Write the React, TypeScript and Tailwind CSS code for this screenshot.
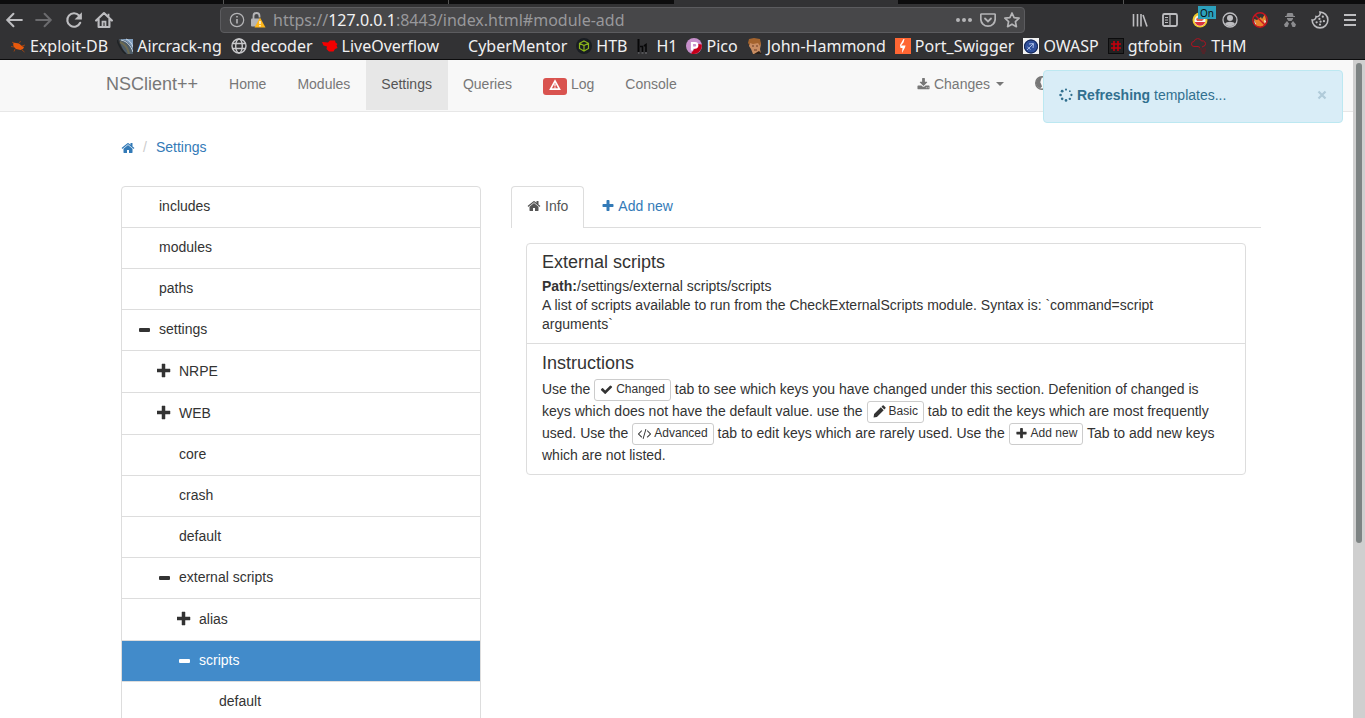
import type { ReactNode } from 'react';

const PATHS = {
  home: 'M1472 992v480q0 26-19 45t-45 19h-384v-384h-256v384h-384q-26 0-45-19t-19-45v-480q0-1 .5-3t.5-3l575-474 575 474q1 2 1 6zm223-69l-62 74q-8 9-21 11h-3q-13 0-21-7l-692-577-692 577q-12 8-24 7-13-2-21-11l-62-74q-8-10-7-23.5t11-21.5l719-599q32-26 76-26t76 26l244 204v-195q0-14 9-23t23-9h192q14 0 23 9t9 23v408l219 182q10 8 11 21.5t-7 23.5z',
  plus: 'M1600 736v192q0 40-28 68t-68 28h-416v416q0 40-28 68t-68 28h-192q-40 0-68-28t-28-68v-416h-416q-40 0-68-28t-28-68v-192q0-40 28-68t68-28h416v-416q0-40 28-68t68-28h192q40 0 68 28t28 68v416h416q40 0 68 28t28 68z',
  download:
    'M1344 1344q0-26-19-45t-45-19-45 19-19 45 19 45 45 19 45-19 19-45zm256 0q0-26-19-45t-45-19-45 19-19 45 19 45 45 19 45-19 19-45zm128-224v320q0 40-28 68t-68 28h-1472q-40 0-68-28t-28-68v-320q0-40 28-68t68-28h465l135 136q58 56 136 56t136-56l136-136h464q40 0 68 28t28 68zm-325-569q17 41-14 70l-448 448q-18 19-45 19t-45-19l-448-448q-31-29-14-70 17-39 59-39h256v-448q0-26 19-45t45-19h256q26 0 45 19t19 45v448h256q42 0 59 39z',
  code: 'M553 1399l-50 50q-10 10-23 10t-23-10l-466-466q-10-10-10-23t10-23l466-466q10-10 23-10t23 10l50 50q10 10 10 23t-10 23l-393 393 393 393q10 10 10 23t-10 23zm591-1067l-373 1291q-4 13-15.5 19.5t-23.5 2.5l-62-17q-13-4-19.5-15.5t-2.5-24.5l373-1291q4-13 15.5-19.5t23.5-2.5l62 17q13 4 19.5 15.5t2.5 24.5zm657 651l-466 466q-10 10-23 10t-23-10l-50-50q-10-10-10-23t10-23l393-393-393-393q-10-10-10-23t10-23l50-50q10-10 23-10t23 10l466 466q10 10 10 23t-10 23z',
  check:
    'M1671 566q0 40-28 68l-724 724-136 136q-28 28-68 28t-68-28l-136-136-362-362q-28-28-28-68t28-68l136-136q28-28 68-28t68 28l294 295 656-657q28-28 68-28t68 28l136 136q28 28 28 68z',
  pencil: 'M150 1250L1080 320L1470 710L540 1640L80 1710ZM1170 230L1330 70Q1400 10 1470 70L1720 320Q1780 390 1720 460L1560 620Z',
};

function Glyph({ name, className = 'size-[14px]' }: { name: keyof typeof PATHS; className?: string }) {
  return (
    <svg viewBox="0 0 1792 1792" fill="currentColor" aria-hidden="true" className={`inline-block shrink-0 ${className}`}>
      <path d={PATHS[name]} />
    </svg>
  );
}

function Svg({ children, box = 16, className = 'size-4' }: { children: ReactNode; box?: number; className?: string }) {
  return (
    <svg viewBox={`0 0 ${box} ${box}`} fill="none" aria-hidden="true" className={`block shrink-0 ${className}`}>
      {children}
    </svg>
  );
}

function ToolButton({ label, children }: { label: string; children: ReactNode }) {
  return (
    <button type="button" aria-label={label} className="flex size-[18px] items-center justify-center text-[#bdbdc0]">
      {children}
    </button>
  );
}

const BOOKMARKS: { label: string; icon: ReactNode }[] = [
  {
    label: 'Exploit-DB',
    icon: (
      <Svg>
        <path d="M3 4.500l3 .5 3 .5 3 2.500 2 1-1 2-2.500 1L6 11 3.500 8.500z" fill="#e8590c" />
        <path d="M1 8.500l3 .5M5 11l-1 2.500M9 4.500l2-1M12 8l3-1M12 12l2.500 2M2 4l2 1.500" stroke="#9a4313" />
      </Svg>
    ),
  },
  {
    label: 'Aircrack-ng',
    icon: (
      <Svg>
        <path d="M2 1h14v15H10C6 13 4 8 2 1z" fill="#4d5c68" />
        <path d="M3 1c7 1 11 5 13 11V1z" fill="#7f9dbd" />
        <path d="M4 2c6 1 10 6 12 12M9 1c3 1 6 4 7 8" stroke="#c9d7e6" />
        <path d="M3 4c5 2 8 6 9 12" stroke="#6d6a50" strokeWidth="2" />
        <path d="M0 2c2 6 5 11 9 14" stroke="#1f2326" strokeWidth="1.500" />
      </Svg>
    ),
  },
  {
    label: 'decoder',
    icon: (
      <Svg>
        <g stroke="#c9c9cb" strokeWidth="1.400">
          <circle cx="8" cy="8" r="7" />
          <ellipse cx="8" cy="8" rx="3.300" ry="7" />
          <path d="M1.500 5.500h13M1.500 10.500h13" />
        </g>
      </Svg>
    ),
  },
  {
    label: 'LiveOverflow',
    icon: (
      <Svg>
        <path d="M0 4l6 .5L8 2.500h5l.5 2 2 1.500-1 1.500 1 2.500-2.500 1-1.500 2.500H7L4.500 11 5 8.500 1.500 7.500z" fill="#f40000" />
      </Svg>
    ),
  },
  { label: 'CyberMentor', icon: <Svg>{null}</Svg> },
  {
    label: 'HTB',
    icon: (
      <Svg>
        <circle cx="8" cy="8" r="8" fill="#191d22" />
        <path d="M8 3l4.500 2.300v5.200L8 13l-4.500-2.500V5.300zM3.500 5.300L8 7.600l4.500-2.300M8 7.600V13" stroke="#8bb51b" strokeWidth="1.200" />
      </Svg>
    ),
  },
  {
    label: 'H1',
    icon: (
      <Svg>
        <path d="M2.500 1v13" stroke="#070708" strokeWidth="2" />
        <path d="M4 8.500h2.500V14M8 8l2-1.500V14" stroke="#070708" strokeWidth="1.600" />
        <path d="M2 15h1.500M5.500 15h2M9 15h2" stroke="#77777a" />
      </Svg>
    ),
  },
  {
    label: 'Pico',
    icon: (
      <Svg>
        <circle cx="8" cy="8" r="8" fill="#c78fcb" />
        <path d="M15.700 6.500A8 8 0 0 1 5 15.400L12 6z" fill="#c5001a" />
        <path d="M6 12.500V5h3a2.300 2.300 0 0 1 0 4.600H7" stroke="#fff" strokeWidth="2.200" />
      </Svg>
    ),
  },
  {
    label: 'John-Hammond',
    icon: (
      <Svg>
        <path d="M2 3l4-2 6 1 2 4-1 5 1 5H6L4 11 2 8z" fill="#c98d62" />
        <path d="M1 5l1-4 5-1 6 1 1 5-1 2-2-3-5 1-3-1v3z" fill="#a3632d" />
        <path d="M5 8h2M9 8h2M7 12h3" stroke="#6b3c26" />
        <path d="M7 16l5-3 3 3z" fill="#2c2018" />
      </Svg>
    ),
  },
  {
    label: 'Port_Swigger',
    icon: (
      <Svg>
        <rect width="16" height="16" fill="#ff6633" />
        <path d="M9.500 1L8.500 4.500 6 7.500h4.500L10 9.500 7 15l.5-5H5.500L5 7l3.500-6z" fill="#fff" />
      </Svg>
    ),
  },
  {
    label: 'OWASP',
    icon: (
      <Svg>
        <rect width="16" height="16" fill="#f2f2f2" />
        <circle cx="8" cy="8.500" r="7" fill="#2f4f9a" />
        <circle cx="8" cy="8.500" r="6.500" stroke="#12224d" />
        <path d="M4 12l6-6M6 6l4.500-.5L10 10M4.500 9l3 2.500" stroke="#a9bde6" />
      </Svg>
    ),
  },
  {
    label: 'gtfobin',
    icon: (
      <Svg>
        <rect width="16" height="16" fill="#0c0c0d" />
        <rect x="1" y="1" width="14" height="14" fill="#222" />
        <path d="M6 3v10M10 3v10M3 6h10M3 10h10" stroke="#c4000d" strokeWidth="1.600" />
      </Svg>
    ),
  },
  {
    label: 'THM',
    icon: (
      <Svg>
        <path d="M7 8.500H3a2.500 2.500 0 0 1 0-5A4 4 0 0 1 10.500 3a3 3 0 0 1 3.500 4.500L11 9M7 8.500l2 1" stroke="#b01220" />
        <path d="M8 11h3M12 11h3M10 13h5M11 15h3" stroke="#6e1820" />
      </Svg>
    ),
  },
];

type TreeNode = { label: string; depth: number; state?: 'open' | 'closed'; active?: boolean };

const TREE: TreeNode[] = [
  { label: 'includes', depth: 0 },
  { label: 'modules', depth: 0 },
  { label: 'paths', depth: 0 },
  { label: 'settings', depth: 0, state: 'open' },
  { label: 'NRPE', depth: 1, state: 'closed' },
  { label: 'WEB', depth: 1, state: 'closed' },
  { label: 'core', depth: 1 },
  { label: 'crash', depth: 1 },
  { label: 'default', depth: 1 },
  { label: 'external scripts', depth: 1, state: 'open' },
  { label: 'alias', depth: 2, state: 'closed' },
  { label: 'scripts', depth: 2, state: 'open', active: true },
  { label: 'default', depth: 3 },
];

const INDENT = ['pl-[15px]', 'pl-[35px]', 'pl-[55px]', 'pl-[75px]'];

function TreeRow({ node }: { node: TreeNode }) {
  const height = node.state === 'closed' ? 'h-[42px]' : 'h-[41px]';
  const colour = node.active ? 'bg-[#428bca] text-white' : 'text-[#333]';
  return (
    <li className={`border-b border-[#ddd] ${height}`}>
      <a href="#module-add" className={`flex h-full items-center pb-[2px] ${INDENT[node.depth]} ${colour}`}>
        <span className="flex w-[22px] items-center">
          {node.state === 'open' && (
            <Svg box={15} className="size-[15px]">
              <rect x="2" y="6" width="11" height="4" rx="1" fill="currentColor" />
            </Svg>
          )}
          {node.state === 'closed' && (
            <Svg box={15} className="size-[15px]">
              <path d="M5 1h3v5h5v3H8v5H5V9H0V6h5z" fill="currentColor" stroke="currentColor" strokeWidth=".5" strokeLinejoin="round" />
            </Svg>
          )}
        </span>
        {node.label}
      </a>
    </li>
  );
}

function BrowserBar() {
  return (
    <header className="shrink-0 border-b border-[#0c0c0d] bg-[#323234] font-['Noto_Sans',sans-serif] text-[#f0f0f1]">
      <div className="flex h-1 bg-[#0c0c0d]">
        <span className="w-[224px] border-r border-[#555]" />
        <span className="w-[225px] border-r border-[#555]" />
        <span className="w-[225px]" />
        <span className="w-[224px] bg-[#323234]" />
        <span className="w-[226px] border-r border-[#555]" />
      </div>
      <div className="flex h-8 items-center pr-[6px] pl-[5px]">
        <div className="flex w-[215px] items-center gap-3">
          <ToolButton label="Back">
            <Svg className="size-[18px]">
              <path d="M15 8H2M7.500 2.500L2 8l5.500 5.500" stroke="currentColor" strokeWidth="1.800" strokeLinecap="round" />
            </Svg>
          </ToolButton>
          <ToolButton label="Forward">
            <Svg className="size-[18px]">
              <path d="M1 8h13M8.500 2.500L14 8l-5.500 5.500" stroke="#6b6b6e" strokeWidth="1.800" strokeLinecap="round" />
            </Svg>
          </ToolButton>
          <ToolButton label="Reload">
            <Svg className="size-[18px]">
              <path d="M13.500 10.500A6 6 0 1 1 12.500 4" stroke="currentColor" strokeWidth="1.900" strokeLinecap="round" />
              <path d="M15 1v6.500H8.500z" fill="currentColor" />
            </Svg>
          </ToolButton>
          <ToolButton label="Home page">
            <Svg className="size-[18px]">
              <path d="M1 8.500L8 1.800l7 6.700M3.200 7.500v6.700h9.600V7.500" stroke="currentColor" strokeWidth="1.900" strokeLinejoin="round" strokeLinecap="round" />
              <path d="M6.700 14V9.500h2.600V14M12 2.500V5" stroke="currentColor" strokeWidth="1.600" />
            </Svg>
          </ToolButton>
        </div>
        <div className="flex h-[26px] min-w-0 flex-1 items-center rounded-sm border border-[#5c5c5f] bg-[#474749] pr-1 pl-2">
          <Svg className="size-4">
            <circle cx="8" cy="8" r="6.700" stroke="#b5b5b7" strokeWidth="1.200" />
            <path d="M8 7v4.500M8 4v1.600" stroke="#b5b5b7" strokeWidth="1.600" />
          </Svg>
          <Svg className="ml-[5px] size-4">
            <path d="M3.500 7V4a3 3 0 0 1 6 0v1.500" stroke="#b5b5b7" strokeWidth="1.800" />
            <rect x="1" y="6.500" width="9" height="8" rx="1" fill="#b5b5b7" />
            <path d="M10 5.500L15.500 15.500h-11z" fill="#ffb61a" />
            <path d="M10 9v3M10 13v1.400" stroke="#fff" strokeWidth="1.300" />
          </Svg>
          <a href="#module-add" className="ml-[7px] flex-1 text-[16px] leading-6 text-[#98989b]">
            https://<span className="text-[#f2f2f3]">127.0.0.1</span>:8443/index.html#module-add
          </a>
          <div className="flex items-center gap-2 text-[#b5b5b7]">
            <Svg>
              <path d="M2 8h.01M8 8h.01M14 8h.01" stroke="currentColor" strokeWidth="4" strokeLinecap="round" />
            </Svg>
            <Svg>
              <path d="M1.500 2h13a.8.8 0 0 1 .7.8V7a7 7 0 0 1-14.400 0V2.800a.8.8 0 0 1 .7-.8z" stroke="currentColor" strokeWidth="1.700" />
              <path d="M5 6.500l3 3 3-3" stroke="currentColor" strokeWidth="1.800" strokeLinecap="round" />
            </Svg>
            <Svg>
              <path d="M8 1l2.100 4.700 5 .5-3.700 3.500 1 5L8 12.200l-4.400 2.500 1-5L.9 6.200l5-.5z" stroke="currentColor" strokeWidth="1.700" strokeLinejoin="round" />
            </Svg>
          </div>
        </div>
        <div className="ml-[106px] flex items-center gap-3">
          <ToolButton label="Library">
            <Svg>
              <path d="M1.500 2v12.500M5.500 2v12.500M9 2v12.500M11 3l4 11.500" stroke="currentColor" strokeWidth="1.600" />
            </Svg>
          </ToolButton>
          <ToolButton label="Sidebars">
            <Svg>
              <rect x="1" y="2" width="14" height="12" rx="1.500" stroke="currentColor" strokeWidth="1.800" />
              <path d="M8 2v12M3 5.500h3M3 8h3M3 10.500h3" stroke="currentColor" strokeWidth="1.200" />
            </Svg>
          </ToolButton>
          <span className="relative">
            <ToolButton label="Proxy switcher">
              <Svg>
                <circle cx="8" cy="8" r="7.500" fill="#f0c92d" />
                <circle cx="8" cy="8.500" r="5.500" fill="#f4f4f4" />
                <path d="M2.800 10h10.400A5.500 5.500 0 0 1 2.800 10z" fill="#d9303e" />
                <path d="M4 7l4-3 4 3-2 2H5z" fill="#d8604c" />
              </Svg>
            </ToolButton>
            <span className="absolute -top-[5px] left-[7px] flex h-[13px] w-[18px] items-center justify-center bg-[#2ca1bd] text-[10px] leading-3 text-[#0c0c0d]">
              On
            </span>
          </span>
          <ToolButton label="Account">
            <Svg>
              <circle cx="8" cy="8" r="7" stroke="currentColor" strokeWidth="1.300" />
              <circle cx="8" cy="6" r="3" fill="currentColor" />
              <path d="M3 12c1-3 9-3 10 0-2.500 3-7.500 3-10 0z" fill="currentColor" />
            </Svg>
          </ToolButton>
          <ToolButton label="Proxy off">
            <Svg>
              <path d="M2 7l3 1 4-3 1 2 3-5 1 6-1 5-4 2-5-1z" fill="#e8842c" />
              <path d="M2 8l2 4-1 1zM12 8l2 1-1 3z" fill="#f3f3f3" />
              <circle cx="8" cy="8" r="7.200" stroke="#c81420" strokeWidth="1.400" />
              <path d="M3 3l10 10" stroke="#c81420" strokeWidth="1.400" />
            </Svg>
          </ToolButton>
          <ToolButton label="User agent">
            <Svg>
              <path d="M5 1.500l1-.5h4l1 .5.5 2.500h1.500v1h-10V4h1.500zM5 6h6v1L9.500 9h-3L5 7z" fill="#8c8c8f" />
              <path d="M5 9l2 2.500L5.500 15H3l-1-2.500zM11 9l-2 2.500 1.500 3.500H13l1-2.500z" fill="#8c8c8f" />
            </Svg>
          </ToolButton>
          <ToolButton label="Cookies">
            <Svg className="size-[18px]">
              <path d="M8 1A7 7 0 1 1 1 8a3 3 0 0 0 3.500-3A3 3 0 0 0 8 1z" stroke="currentColor" strokeWidth="1.400" />
              <path d="M10.500 5h.01M7.500 7h.01M11.500 9h.01M5 10h.01M8 12h.01M8.500 9.500h.01" stroke="currentColor" strokeWidth="2" strokeLinecap="round" />
            </Svg>
          </ToolButton>
          <ToolButton label="Menu">
            <Svg>
              <path d="M2 3h12M2 8h12M2 13h12" stroke="currentColor" strokeWidth="2" />
            </Svg>
          </ToolButton>
        </div>
      </div>
      <nav aria-label="Bookmarks" className="flex h-[23px] items-center gap-[9px] pb-[3px] pl-[10px] text-[16px] leading-5">
        {BOOKMARKS.map((b) => (
          <a key={b.label} href="#module-add" className="flex items-center gap-1 whitespace-nowrap">
            {b.icon}
            {b.label}
          </a>
        ))}
      </nav>
    </header>
  );
}

function NavLink({ children, active }: { children: ReactNode; active?: boolean }) {
  return (
    <a
      href="#module-add"
      className={`flex h-[50px] items-center gap-1 pr-4 pb-[2px] pl-[15px] ${active ? 'bg-[#e7e7e7] text-[#555]' : 'text-[#777]'}`}
    >
      {children}
    </a>
  );
}

function Navbar() {
  return (
    <nav aria-label="Main" className="h-[52px] border-b border-[#e7e7e7] bg-[#f8f8f8]">
      <div className="mx-auto flex w-full max-w-[1171px] px-[15px]">
        <a href="#module-add" className="flex h-[50px] items-center pr-4 pb-[2px] text-[18px] text-[#777]">
          NSClient++
        </a>
        <NavLink>Home</NavLink>
        <NavLink>Modules</NavLink>
        <NavLink active>Settings</NavLink>
        <NavLink>Queries</NavLink>
        <NavLink>
          <span className="mt-1 flex h-[17px] w-6 items-center justify-center rounded-[3px] bg-[#d9534f] pb-[2px] text-white">
            <Svg className="size-3">
              <path d="M8 2.500L14 13.500H2z" stroke="currentColor" strokeWidth="2.200" />
              <path d="M8 6v4M8 11v1.500" stroke="currentColor" strokeWidth="1.600" />
            </Svg>
          </span>
          Log
        </NavLink>
        <NavLink>Console</NavLink>
        <div className="ml-auto flex">
          <NavLink>
            <Glyph name="download" className="size-[13px]" />
            Changes
            <Svg box={8} className="ml-[2px] size-2">
              <path d="M0 2h8L4 6z" fill="currentColor" />
            </Svg>
          </NavLink>
          <a href="#module-add" aria-label="Server" className="flex h-[50px] w-[227px] items-center px-[15px] pb-1 text-[#777]">
            <Svg className="size-3.5">
              <circle cx="8" cy="8" r="7.200" stroke="currentColor" strokeWidth="1.600" />
              <path d="M1 8a7 7 0 0 1 7-7l-1 3-1 3 1 2 1 3-2 2A7 7 0 0 1 1 8z" fill="currentColor" />
            </Svg>
          </a>
        </div>
      </div>
    </nav>
  );
}

function Chip({ icon, children }: { icon: keyof typeof PATHS; children: ReactNode }) {
  return (
    <button
      type="button"
      className="-my-1 inline-flex h-[22px] items-center gap-[3px] rounded-[3px] border border-[#ccc] bg-white px-[5px] pb-[2px] align-middle text-[12px] leading-4 text-[#333]"
    >
      <Glyph name={icon} className="size-[13px]" />
      {children}
    </button>
  );
}

function InfoPanel() {
  return (
    <div className="mx-[15px] mt-[15px] rounded-sm border border-[#ddd] text-[#333]">
      <section className="border-b border-[#ddd] px-[15px] pt-2 pb-[9px]">
        <h4 className="text-[18px] leading-5">External scripts</h4>
        <p className="mt-[5px] leading-[19px]">
          <strong>Path:</strong>/settings/external scripts/scripts
          <br />
          A list of scripts available to run from the CheckExternalScripts module. Syntax is: `command=script
          <br />
          arguments`
        </p>
      </section>
      <section className="px-[15px] pt-[9px] pb-2">
        <h4 className="text-[18px] leading-5">Instructions</h4>
        <p className="mt-[5px] leading-[22px]">
          Use the <Chip icon="check">Changed</Chip> tab to see which keys you have changed under this section. Defenition of
          changed is
          <br />
          keys which does not have the default value. use the <Chip icon="pencil">Basic</Chip> tab to edit the keys which are
          most frequently
          <br />
          used. Use the <Chip icon="code">Advanced</Chip> tab to edit keys which are rarely used. Use the{' '}
          <Chip icon="plus">Add new</Chip> Tab to add new keys
          <br />
          which are not listed.
        </p>
      </section>
    </div>
  );
}

function Toast() {
  return (
    <div
      role="status"
      className="absolute top-[10px] right-[22px] flex h-[53px] w-[300px] items-center rounded-sm border border-[#bce8f1] bg-[#d9edf7] px-[15px] pb-1 text-[#31708f]"
    >
      <Svg className="mr-1 size-3.5">
        <g fill="currentColor">
          <circle cx="8" cy="1.800" r="1.200" />
          <circle cx="12.400" cy="3.600" r="1" />
          <circle cx="14.200" cy="8" r="1.300" />
          <circle cx="12.400" cy="12.400" r="1.400" />
          <circle cx="8" cy="14.200" r="1.500" />
          <circle cx="3.600" cy="12.400" r="1.500" />
          <circle cx="1.800" cy="8" r="1.500" />
          <circle cx="3.600" cy="3.600" r="1.600" />
        </g>
      </Svg>
      <span>
        <strong>Refreshing</strong> templates...
      </span>
      <button type="button" aria-label="Close" className="ml-auto text-[#b0cbd9]">
        <Svg box={10} className="size-2.5">
          <path d="M1.500 1.500l7 7M8.500 1.500l-7 7" stroke="currentColor" strokeWidth="2.200" />
        </Svg>
      </button>
    </div>
  );
}

export default function App() {
  return (
    <div className="flex h-screen flex-col overflow-hidden bg-white">
      <BrowserBar />
      <div className="relative flex min-h-0 flex-1 font-['Liberation_Sans',Arial,sans-serif] text-[14px] leading-5">
        <div className="min-w-0 flex-1 overflow-hidden">
          <Navbar />
          <main className="mx-auto w-full max-w-[1171px] pr-px pl-[30px]">
            <nav aria-label="Breadcrumb" className="flex items-center gap-2 pt-[25px] text-[#337ab7]">
              <a href="#module-add" aria-label="Home">
                <Glyph name="home" className="block size-[14px]" />
              </a>
              <span className="text-[#ccc]">/</span>
              <a href="#module-add" className="pl-px">
                Settings
              </a>
            </nav>
            <div className="mt-[29px] flex gap-[30px]">
              <ul className="w-[360px] shrink-0 self-start rounded-t-sm border border-[#ddd]">
                {TREE.map((node, i) => (
                  <TreeRow key={i} node={node} />
                ))}
              </ul>
              <div className="min-w-0 flex-1">
                <div role="tablist" className="flex border-b border-[#ddd]">
                  <button
                    type="button"
                    role="tab"
                    aria-selected="true"
                    className="-mb-px flex h-[42px] items-center gap-1 rounded-t-sm border border-b-0 border-[#ddd] bg-white px-[15px] pb-[3px] text-[#555]"
                  >
                    <Glyph name="home" className="size-[14px]" />
                    Info
                  </button>
                  <button type="button" role="tab" aria-selected="false" className="flex items-center gap-[3px] px-[17px] pb-[2px] text-[#337ab7]">
                    <Glyph name="plus" className="size-[14px]" />
                    Add new
                  </button>
                </div>
                <InfoPanel />
              </div>
            </div>
          </main>
        </div>
        <div aria-hidden="true" className="flex w-3 justify-center bg-[#cfcfcf] pt-[3px]">
          <div className="h-[480px] w-1.5 rounded-full bg-[#7d8383]" />
        </div>
        <Toast />
      </div>
    </div>
  );
}
